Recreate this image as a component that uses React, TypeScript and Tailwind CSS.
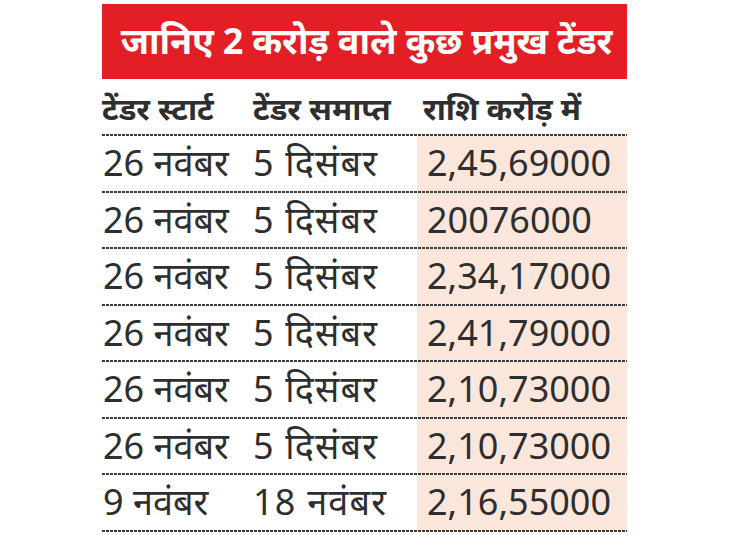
const rows = [
  ["26 नवंबर", "5 दिसंबर", "2,45,69000"],
  ["26 नवंबर", "5 दिसंबर", "20076000"],
  ["26 नवंबर", "5 दिसंबर", "2,34,17000"],
  ["26 नवंबर", "5 दिसंबर", "2,41,79000"],
  ["26 नवंबर", "5 दिसंबर", "2,10,73000"],
  ["26 नवंबर", "5 दिसंबर", "2,10,73000"],
  ["9 नवंबर", "18 नवंबर", "2,16,55000"],
]

function DotLine() {
  return <div className="h-[2px] w-full bg-[repeating-linear-gradient(90deg,#3a3a3a_0_3px,transparent_3px_4px)]" />
}

export default function App() {
  return (
    <div className="w-[730px] h-[548px] bg-white pt-[4px] pl-[102px] font-['Noto_Sans','Noto_Sans_Devanagari','Lohit_Devanagari',sans-serif] text-[#2e2e2e]">
      <div className="w-[525px]">
        <div className="h-[75px] bg-[#e31e24] flex items-center justify-center pb-[2px] pl-[4px] text-white text-[36px] font-bold leading-none whitespace-nowrap tracking-[-0.2px]">
          जानिए 2 करोड़ वाले कुछ प्रमुख टेंडर
        </div>
        <div className="h-[55px] grid grid-cols-[151px_164px_210px] items-center pt-[4px] text-[31px] font-bold leading-none whitespace-nowrap">
          <span>टेंडर स्टार्ट</span>
          <span>टेंडर समाप्त</span>
          <span className="pl-[6px]">राशि करोड़ में</span>
        </div>
        <DotLine />
        {rows.map((r, i) => (
          <div key={i}>
            <div className="h-[54.5px] grid grid-cols-[151px_164px_210px] items-center text-[36px] leading-none whitespace-nowrap">
              <span className="pl-[1px]">{r[0]}</span>
              <span className="tracking-[1.2px]">{r[1]}</span>
              <span className="h-full flex items-center bg-[#fbe6dc] pl-[10px]">{r[2]}</span>
            </div>
            <DotLine />
          </div>
        ))}
      </div>
    </div>
  )
}
